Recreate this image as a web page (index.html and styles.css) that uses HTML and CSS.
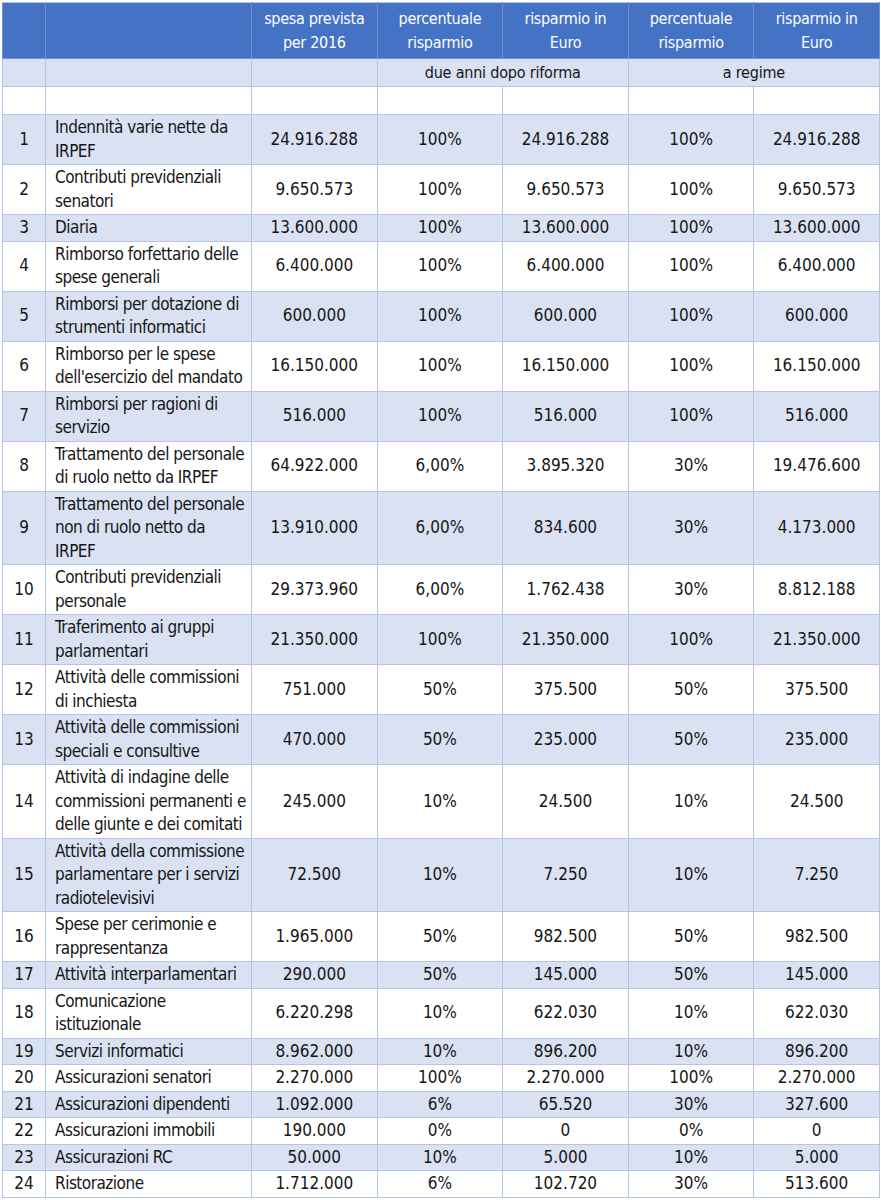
FILE: index.html
```html
<!DOCTYPE html>
<html lang="it">
<head>
<meta charset="utf-8">
<title>Risparmi</title>
<link rel="stylesheet" href="styles.css">
</head>
<body>
<table class="tbl">
  <colgroup>
    <col class="c-num"><col class="c-desc"><col class="c-v"><col class="c-v"><col class="c-v"><col class="c-v"><col class="c-v">
  </colgroup>
  <thead>
    <tr class="head">
      <th></th><th></th>
      <th>spesa prevista<br>per 2016</th>
      <th>percentuale<br>risparmio</th>
      <th>risparmio in<br>Euro</th>
      <th>percentuale<br>risparmio</th>
      <th>risparmio in<br>Euro</th>
    </tr>
  </thead>
  <tbody>
    <tr class="sub odd"><td></td><td></td><td></td><td colspan="2">due anni dopo riforma</td><td colspan="2">a regime</td></tr>
    <tr class="sub"><td></td><td></td><td></td><td></td><td></td><td></td><td></td></tr>
    <tr class="odd"><td>1</td><td class="d">Indennità varie nette da<br>IRPEF</td><td>24.916.288</td><td>100%</td><td>24.916.288</td><td>100%</td><td>24.916.288</td></tr>
    <tr><td>2</td><td class="d">Contributi previdenziali<br>senatori</td><td>9.650.573</td><td>100%</td><td>9.650.573</td><td>100%</td><td>9.650.573</td></tr>
    <tr class="odd"><td>3</td><td class="d">Diaria</td><td>13.600.000</td><td>100%</td><td>13.600.000</td><td>100%</td><td>13.600.000</td></tr>
    <tr><td>4</td><td class="d">Rimborso forfettario delle<br>spese generali</td><td>6.400.000</td><td>100%</td><td>6.400.000</td><td>100%</td><td>6.400.000</td></tr>
    <tr class="odd"><td>5</td><td class="d">Rimborsi per dotazione di<br>strumenti informatici</td><td>600.000</td><td>100%</td><td>600.000</td><td>100%</td><td>600.000</td></tr>
    <tr><td>6</td><td class="d">Rimborso per le spese<br>dell'esercizio del mandato</td><td>16.150.000</td><td>100%</td><td>16.150.000</td><td>100%</td><td>16.150.000</td></tr>
    <tr class="odd"><td>7</td><td class="d">Rimborsi per ragioni di<br>servizio</td><td>516.000</td><td>100%</td><td>516.000</td><td>100%</td><td>516.000</td></tr>
    <tr><td>8</td><td class="d">Trattamento del personale<br>di ruolo netto da IRPEF</td><td>64.922.000</td><td>6,00%</td><td>3.895.320</td><td>30%</td><td>19.476.600</td></tr>
    <tr class="odd"><td>9</td><td class="d">Trattamento del personale<br>non di ruolo netto da<br>IRPEF</td><td>13.910.000</td><td>6,00%</td><td>834.600</td><td>30%</td><td>4.173.000</td></tr>
    <tr><td>10</td><td class="d">Contributi previdenziali<br>personale</td><td>29.373.960</td><td>6,00%</td><td>1.762.438</td><td>30%</td><td>8.812.188</td></tr>
    <tr class="odd"><td>11</td><td class="d">Traferimento ai gruppi<br>parlamentari</td><td>21.350.000</td><td>100%</td><td>21.350.000</td><td>100%</td><td>21.350.000</td></tr>
    <tr><td>12</td><td class="d">Attività delle commissioni<br>di inchiesta</td><td>751.000</td><td>50%</td><td>375.500</td><td>50%</td><td>375.500</td></tr>
    <tr class="odd"><td>13</td><td class="d">Attività delle commissioni<br>speciali e consultive</td><td>470.000</td><td>50%</td><td>235.000</td><td>50%</td><td>235.000</td></tr>
    <tr><td>14</td><td class="d">Attività di indagine delle<br>commissioni permanenti e<br>delle giunte e dei comitati</td><td>245.000</td><td>10%</td><td>24.500</td><td>10%</td><td>24.500</td></tr>
    <tr class="odd"><td>15</td><td class="d">Attività della commissione<br>parlamentare per i servizi<br>radiotelevisivi</td><td>72.500</td><td>10%</td><td>7.250</td><td>10%</td><td>7.250</td></tr>
    <tr><td>16</td><td class="d">Spese per cerimonie e<br>rappresentanza</td><td>1.965.000</td><td>50%</td><td>982.500</td><td>50%</td><td>982.500</td></tr>
    <tr class="odd"><td>17</td><td class="d">Attività interparlamentari</td><td>290.000</td><td>50%</td><td>145.000</td><td>50%</td><td>145.000</td></tr>
    <tr><td>18</td><td class="d">Comunicazione<br>istituzionale</td><td>6.220.298</td><td>10%</td><td>622.030</td><td>10%</td><td>622.030</td></tr>
    <tr class="odd"><td>19</td><td class="d">Servizi informatici</td><td>8.962.000</td><td>10%</td><td>896.200</td><td>10%</td><td>896.200</td></tr>
    <tr><td>20</td><td class="d">Assicurazioni senatori</td><td>2.270.000</td><td>100%</td><td>2.270.000</td><td>100%</td><td>2.270.000</td></tr>
    <tr class="odd"><td>21</td><td class="d">Assicurazioni dipendenti</td><td>1.092.000</td><td>6%</td><td>65.520</td><td>30%</td><td>327.600</td></tr>
    <tr><td>22</td><td class="d">Assicurazioni immobili</td><td>190.000</td><td>0%</td><td>0</td><td>0%</td><td>0</td></tr>
    <tr class="odd"><td>23</td><td class="d">Assicurazioni RC</td><td>50.000</td><td>10%</td><td>5.000</td><td>10%</td><td>5.000</td></tr>
    <tr><td>24</td><td class="d">Ristorazione</td><td>1.712.000</td><td>6%</td><td>102.720</td><td>30%</td><td>513.600</td></tr>
  </tbody>
</table>
</body>
</html>
```

FILE: styles.css
```css
html, body {
  margin: 0;
  padding: 0;
  background: #ffffff;
}

body {
  padding: 2px 0 0 2px;
  font-family: "DejaVu Sans Condensed", "DejaVu Sans", sans-serif;
  font-stretch: condensed;
  font-size: 17px;
  color: #161616;
}

.tbl {
  border-collapse: collapse;
  table-layout: fixed;
  width: 877px;
  letter-spacing: 0;
}

.c-num { width: 43px; }
.c-desc { width: 206px; }
.c-v { width: 125.6px; }

.tbl th,
.tbl td {
  border: 1px solid #b4c6e7;
  padding: 1px 4px;
  line-height: 23.5px;
  text-align: center;
  vertical-align: middle;
  font-weight: normal;
}

.head th {
  background: #4472c4;
  color: #ffffff;
  border-color: #6f93d3;
  border-top-color: #b4c6e7;
  padding: 4px 4px;
  font-size: 16px;
  letter-spacing: -0.3px;
}

.sub td {
  height: 25px;
  padding: 1px 4px;
  font-size: 16px;
  letter-spacing: -0.2px;
}

.tbl tr.odd td {
  background: #d9e1f2;
}

.tbl td.d {
  text-align: left;
  padding-left: 9px;
  padding-right: 2px;
  letter-spacing: -0.5px;
}
```
